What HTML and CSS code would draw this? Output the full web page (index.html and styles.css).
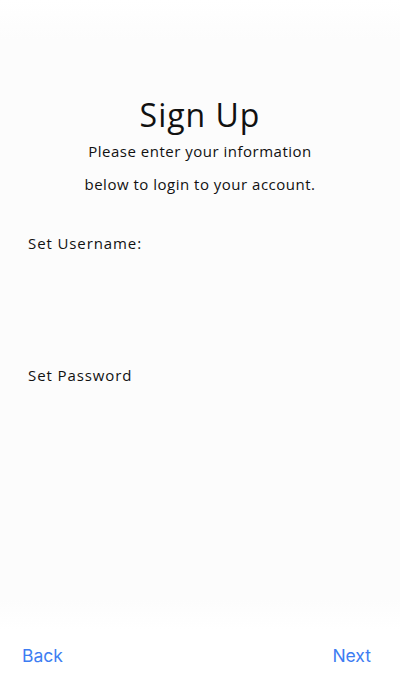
FILE: index.html
```html
<!DOCTYPE html>
<html>
<head>
<meta charset="utf-8">
<link rel="stylesheet" href="styles.css">
</head>
<body>
<div class="screen">
  <div class="header">
    <h1 class="title">Sign Up</h1>
    <p class="subtitle">Please enter your information</p>
    <p class="subtitle">below to login to your account.</p>
  </div>
  <div class="form">
    <div class="field field-user">Set Username:</div>
    <div class="field field-pass">Set Password</div>
  </div>
  <div class="nav">
    <span class="nav-btn">Back</span>
    <span class="nav-btn">Next</span>
  </div>
</div>
</body>
</html>
```
FILE: styles.css
```css
* { box-sizing: border-box; margin: 0; padding: 0; }
html, body { width: 400px; height: 700px; background: #ffffff; }
.screen {
  width: 400px;
  height: 700px;
  display: flex;
  flex-direction: column;
  font-family: "Open Sans", "Noto Sans", sans-serif;
  color: #111;
  background: linear-gradient(#ffffff 0, #fcfcfc 40px, #fcfcfc 600px, #ffffff 630px);
}
.header {
  padding-top: 95px;
  display: flex;
  flex-direction: column;
  align-items: center;
}
.title {
  font-weight: 400;
  font-size: 32px;
  line-height: 40px;
  letter-spacing: 1px;
}
.subtitle {
  font-size: 15px;
  line-height: 33px;
  letter-spacing: 0.5px;
}
.form {
  padding: 0 28px;
  font-size: 15px;
  letter-spacing: 0.9px;
  flex: 1;
}
.field { line-height: 20px; }
.field-user { margin-top: 32px; }
.field-pass { margin-top: 112px; }
.nav {
  display: flex;
  justify-content: space-between;
  padding: 0 29px 33px 22px;
  font-family: "Inter", "Liberation Sans", sans-serif;
  font-size: 17.5px;
  line-height: 22px;
  color: #3d7df2;
}
```
